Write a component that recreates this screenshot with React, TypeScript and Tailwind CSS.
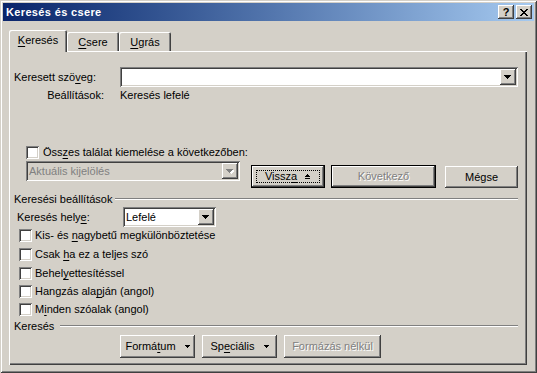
import React from "react";

const raised =
  "shadow-[inset_-1px_-1px_#404040,inset_1px_1px_#ffffff,inset_-2px_-2px_#808080,inset_2px_2px_#d4d0c8]";
const sunken =
  "shadow-[inset_1px_1px_#808080,inset_-1px_-1px_#ffffff,inset_2px_2px_#404040,inset_-2px_-2px_#d4d0c8]";
const etched = "text-[#808080] [text-shadow:1px_1px_0_#ffffff]";

function U({ children }: { children: React.ReactNode }) {
  return <span className="underline underline-offset-[2px]">{children}</span>;
}

function DownArrow({ disabled }: { disabled?: boolean }) {
  return (
    <svg width="8" height="5" viewBox="0 0 8 5" className="block">
      {disabled && (
        <path d="M2 1h7v1H2z M3 2h5v1H3z M4 3h3v1H4z M5 4h1v1H5z" fill="#ffffff" />
      )}
      <path
        d="M0 0h7v1H0z M1 1h5v1H1z M2 2h3v1H2z M3 3h1v1H3z"
        fill={disabled ? "#808080" : "#000000"}
      />
    </svg>
  );
}

function SmallArrow({ disabled }: { disabled?: boolean }) {
  return (
    <svg width="5" height="3" viewBox="0 0 5 3" className="block">
      <path d="M0 0h5v1H0z M1 1h3v1H1z M2 2h1v1H2z" fill={disabled ? "#808080" : "#000000"} />
    </svg>
  );
}

function DropBtn({ disabled }: { disabled?: boolean }) {
  return (
    <div className={`w-[16px] h-[16px] shrink-0 bg-[#d4d0c8] flex items-center justify-center ${raised}`}>
      <DownArrow disabled={disabled} />
    </div>
  );
}

function Combo({
  className,
  value,
  disabled,
}: {
  className: string;
  value?: string;
  disabled?: boolean;
}) {
  return (
    <div
      className={`h-[20px] p-[2px] flex items-center ${disabled ? "bg-[#d4d0c8]" : "bg-white"} ${sunken} ${className}`}
    >
      <div className={`flex-1 pl-[1px] truncate ${disabled ? "text-[#808080]" : "text-black"}`}>{value}</div>
      <DropBtn disabled={disabled} />
    </div>
  );
}

function Check() {
  return <div className={`w-[13px] h-[13px] shrink-0 bg-white ${sunken}`} />;
}

function Btn({
  className,
  children,
  disabled,
  def,
  focus,
}: {
  className: string;
  children: React.ReactNode;
  disabled?: boolean;
  def?: boolean;
  focus?: boolean;
}) {
  const inner = (
    <div className={`h-full w-full bg-[#d4d0c8] flex items-center justify-center ${raised} ${disabled ? etched : "text-black"}`}>
      {focus ? (
        <div className="h-[calc(100%-8px)] w-[calc(100%-8px)] border border-dotted border-black flex items-center justify-center">
          {children}
        </div>
      ) : (
        children
      )}
    </div>
  );
  if (def) {
    return <div className={`border border-black ${className}`}>{inner}</div>;
  }
  return <div className={className}>{inner}</div>;
}

function Sep({ label, lineStart }: { label: string; lineStart: string }) {
  return (
    <div className="h-[14px] flex items-center pl-[5px] pr-[9px]">
      <span className={`whitespace-nowrap ${lineStart}`}>{label}</span>
      <div className="flex-1 h-[2px] border-t border-[#808080] border-b border-b-white" />
    </div>
  );
}

function CheckRow({ children, className }: { children: React.ReactNode; className: string }) {
  return (
    <div className={`h-[13px] flex items-center pl-[10px] gap-[3px] ${className}`}>
      <Check />
      <span className="whitespace-nowrap">{children}</span>
    </div>
  );
}

export default function App() {
  return (
    <div className="w-[537px] h-[373px] bg-[#d4d0c8] p-[3px] font-['Liberation_Sans',Arial,sans-serif] text-[11px] leading-[13px] text-black shadow-[inset_1px_1px_#d4d0c8,inset_-1px_-1px_#404040,inset_2px_2px_#ffffff,inset_-2px_-2px_#808080] overflow-hidden select-none">
      {/* title bar */}
      <div className="h-[18px] flex items-center bg-linear-to-r from-[#0a246a] to-[#a6caf0] pl-[3px] pr-[2px]">
        <span className="text-white font-bold tracking-[0.35px]">Keresés és csere</span>
        <div className="ml-auto flex gap-[2px]">
          <div className={`w-[16px] h-[14px] bg-[#d4d0c8] flex items-center justify-center font-bold text-[11px] leading-none ${raised}`}>
            ?
          </div>
          <div className={`w-[16px] h-[14px] bg-[#d4d0c8] flex items-center justify-center ${raised}`}>
            <svg width="8" height="7" viewBox="0 0 8 7" className="block">
              <path
                d="M0 0h2v1H0z M6 0h2v1H6z M1 1h2v1H1z M5 1h2v1H5z M2 2h4v1H2z M3 3h2v1H3z M2 4h4v1H2z M1 5h2v1H1z M5 5h2v1H5z M0 6h2v1H0z M6 6h2v1H6z"
                fill="#000"
              />
            </svg>
          </div>
        </div>
      </div>

      {/* tabs */}
      <div className="mt-[9px] ml-[6px] h-[21px] flex items-end">
        <div className="relative z-10 w-[58px] h-[22px] mb-[-1px] bg-[#d4d0c8] rounded-t-[2px] shadow-[inset_1px_1px_#ffffff,inset_-1px_0_#404040,inset_-2px_0_#808080] flex items-start justify-center pt-[4px]">
          <span>
            <U>K</U>eresés
          </span>
        </div>
        <div className="w-[52px] h-[19px] bg-[#d4d0c8] rounded-t-[2px] shadow-[inset_1px_1px_#ffffff,inset_-1px_0_#404040,inset_-2px_0_#808080] flex items-start justify-center pt-[4px]">
          <span>
            <U>C</U>sere
          </span>
        </div>
        <div className="w-[52px] h-[19px] bg-[#d4d0c8] rounded-t-[2px] shadow-[inset_1px_1px_#ffffff,inset_-1px_0_#404040,inset_-2px_0_#808080] flex items-start justify-center pt-[4px]">
          <span>
            <U>U</U>grás
          </span>
        </div>
      </div>

      {/* panel */}
      <div className="ml-[6px] w-[518px] h-[314px] flex flex-col shadow-[inset_1px_1px_#ffffff,inset_-1px_-1px_#404040,inset_-2px_-2px_#808080]">
        <div className="mt-[16px] h-[20px] flex items-center pl-[5px]">
          <span className="w-[106px]">
            Keresett szö<U>v</U>eg:
          </span>
          <Combo className="w-[398px]" />
        </div>
        <div className="h-[16px] flex items-center pl-[5px]">
          <span className="w-[106px] pr-[16px] text-right">Beállítások:</span>
          <span>Keresés lefelé</span>
        </div>

        <div className="mt-[43px] h-[13px] flex items-center pl-[17px] gap-[4px]">
          <Check />
          <span>
            Öss<U>z</U>es találat kiemelése a következőben:
          </span>
        </div>

        <div className="mt-[2px] h-[27px] flex items-start pl-[17px]">
          <Combo className="w-[214px]" value="Aktuális kijelölés" disabled />
          <Btn className="ml-[11px] mt-[4px] w-[74px] h-[23px]" def focus>
            <span className="flex items-center gap-[7px]">
              <span>
                Vissz<U>a</U>
              </span>
              <svg width="7" height="6" viewBox="0 0 7 6" className="block">
                <path d="M3 0h1v1H3z M2 1h3v1H2z M1 2h5v1H1z M1 4h5v1H1z" fill="#000" />
              </svg>
            </span>
          </Btn>
          <Btn className="ml-[6px] mt-[4px] w-[105px] h-[23px]" def disabled>
            Következő
          </Btn>
          <Btn className="ml-[9px] mt-[5px] w-[73px] h-[22px]">Mégse</Btn>
        </div>

        <div className="mt-[4px]">
          <Sep label="Keresési beállítások" lineStart="mr-[3px]" />
        </div>

        <div className="mt-[1px] h-[20px] flex items-center pl-[8px]">
          <span className="w-[106px]">
            Keresés hely<U>e</U>:
          </span>
          <Combo className="w-[93px]" value="Lefelé" />
        </div>

        <CheckRow className="mt-[2px]">
          Kis- és <U>n</U>agybetű megkülönböztetése
        </CheckRow>
        <CheckRow className="mt-[6px]">
          Csak <U>h</U>a ez a teljes szó
        </CheckRow>
        <CheckRow className="mt-[6px]">
          Behel<U>y</U>ettesítéssel
        </CheckRow>
        <CheckRow className="mt-[5px]">
          Hangzás ala<U>p</U>ján (angol)
        </CheckRow>
        <CheckRow className="mt-[5px]">
          M<U>i</U>nden szóalak (angol)
        </CheckRow>

        <div className="mt-[3px]">
          <Sep label="Keresés" lineStart="mr-[6px]" />
        </div>

        <div className="mt-[2px] h-[23px] flex pl-[111px] gap-[7px]">
          <Btn className="w-[75px] h-[23px]">
            <span className="flex items-center gap-[9px]">
              <span>
                Formá<U>t</U>um
              </span>
              <SmallArrow />
            </span>
          </Btn>
          <Btn className="w-[75px] h-[23px]">
            <span className="flex items-center gap-[9px]">
              <span>
                Sp<U>e</U>ciális
              </span>
              <SmallArrow />
            </span>
          </Btn>
          <Btn className="w-[97px] h-[23px]" disabled>
            Formázás nélkül
          </Btn>
        </div>
      </div>
    </div>
  );
}
